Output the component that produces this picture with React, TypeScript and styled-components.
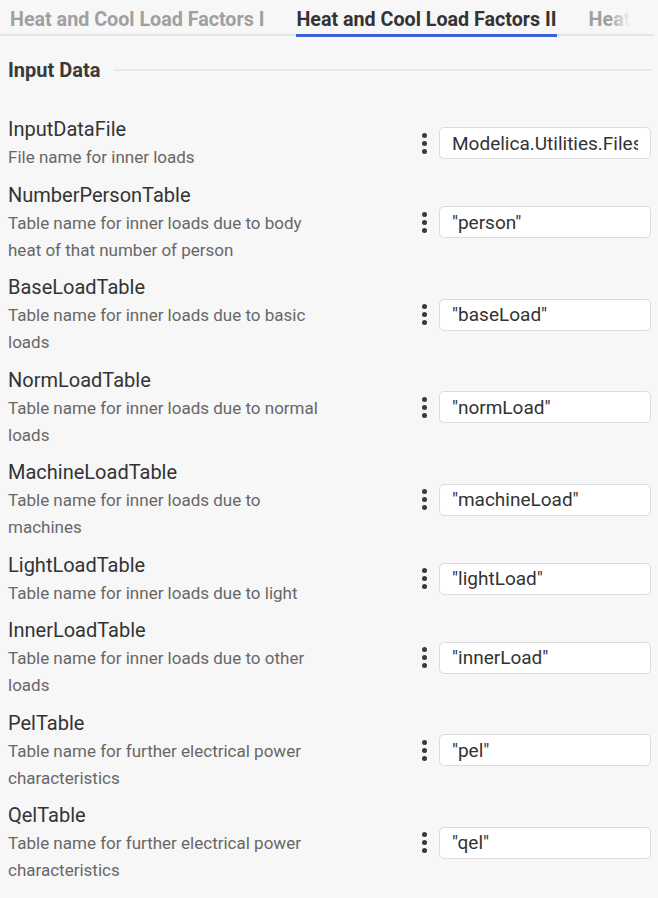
import styled, { createGlobalStyle } from 'styled-components';

const GlobalStyle = createGlobalStyle`
  html, body {
    margin: 0;
    padding: 0;
    background: #f7f7f7;
  }
  body {
    font-family: "Roboto", "Liberation Sans", sans-serif;
    color: #333;
  }
`;

type Param = {
    name: string;
    description: string;
    value: string;
};

const PARAMS: Param[] = [
    { name: 'InputDataFile', description: 'File name for inner loads', value: 'Modelica.Utilities.Files.loadResource()' },
    { name: 'NumberPersonTable', description: 'Table name for inner loads due to body heat of that number of person', value: '"person"' },
    { name: 'BaseLoadTable', description: 'Table name for inner loads due to basic loads', value: '"baseLoad"' },
    { name: 'NormLoadTable', description: 'Table name for inner loads due to normal loads', value: '"normLoad"' },
    { name: 'MachineLoadTable', description: 'Table name for inner loads due to machines', value: '"machineLoad"' },
    { name: 'LightLoadTable', description: 'Table name for inner loads due to light', value: '"lightLoad"' },
    { name: 'InnerLoadTable', description: 'Table name for inner loads due to other loads', value: '"innerLoad"' },
    { name: 'PelTable', description: 'Table name for further electrical power characteristics', value: '"pel"' },
    { name: 'QelTable', description: 'Table name for further electrical power characteristics', value: '"qel"' },
];

const TABS = ['Heat and Cool Load Factors I', 'Heat and Cool Load Factors II', 'Heat'];

const App = () => {
    const active = 1;

    return (
        <Page>
            <GlobalStyle />
            <TabBar>
                <TabStrip>
                    {TABS.map((tab, i) => (
                        <Tab key={tab} $active={i === active}>{tab}</Tab>
                    ))}
                    <TabFade />
                </TabStrip>
            </TabBar>
            <Section>
                <SectionHeader>
                    <SectionTitle>Input Data</SectionTitle>
                    <SectionRule />
                </SectionHeader>
                <ParamList>
                    {PARAMS.map((p) => (
                        <ParamRow key={p.name}>
                            <ParamInfo>
                                <ParamName>{p.name}</ParamName>
                                <ParamDesc>{p.description}</ParamDesc>
                            </ParamInfo>
                            <ParamControl>
                                <MenuDots aria-label="more">
                                    <span /><span /><span />
                                </MenuDots>
                                <ValueInput defaultValue={p.value} />
                            </ParamControl>
                        </ParamRow>
                    ))}
                </ParamList>
            </Section>
        </Page>
    );
}

export default App;

const Page = styled.div`
    width: 658px;
    min-height: 898px;
    background: #f7f7f7;
    overflow: hidden;
`;

const TabBar = styled.div`
    height: 34px;
    border-bottom: 2px solid #e6e6e6;
    margin-right: 4px;
`;

const TabStrip = styled.div`
    position: relative;
    display: flex;
    gap: 32px;
    width: 640px;
    height: 37px;
    padding-left: 10px;
    box-sizing: border-box;
    overflow: hidden;
    white-space: nowrap;
`;

const Tab = styled.div<{ $active: boolean }>`
    flex: none;
    padding-top: 10px;
    height: 24px;
    font-weight: 700;
    font-size: 19.7px;
    line-height: 20px;
    color: ${({ $active }) => ($active ? '#333' : '#a0a0a0')};
    border-bottom: 3px solid ${({ $active }) => ($active ? '#3c63d6' : 'transparent')};
`;

const TabFade = styled.div`
    position: absolute;
    right: 0;
    top: 0;
    height: 34px;
    width: 30px;
    background: linear-gradient(to right, rgba(247, 247, 247, 0), rgba(247, 247, 247, 0.9) 60%, #f7f7f7);
`;

const Section = styled.section`
    padding: 0 7px 0 8px;
`;

const SectionHeader = styled.div`
    display: flex;
    align-items: center;
    gap: 14px;
    height: 34px;
    margin-top: 17px;
`;

const SectionTitle = styled.div`
    font-weight: 700;
    font-size: 20px;
    color: #3a3a3a;
`;

const SectionRule = styled.div`
    flex: 1;
    height: 2px;
    background: #e8e8e8;
`;

const ParamList = styled.div`
    display: flex;
    flex-direction: column;
    gap: 9.5px;
    margin-top: 28px;
`;

const ParamRow = styled.div`
    display: flex;
    align-items: center;
    justify-content: space-between;
`;

const ParamInfo = styled.div`
    width: 315px;
`;

const ParamName = styled.div`
    font-size: 20px;
    line-height: 29px;
    color: #333;
`;

const ParamDesc = styled.div`
    font-size: 17px;
    line-height: 27px;
    color: #676767;
`;

const ParamControl = styled.div`
    display: flex;
    align-items: center;
    gap: 12px;
`;

const MenuDots = styled.div`
    display: flex;
    flex-direction: column;
    gap: 3px;
    width: 5px;

    span {
        width: 5px;
        height: 5px;
        border-radius: 50%;
        background: #3a3a3a;
    }
`;

const ValueInput = styled.input`
    width: 212px;
    height: 32px;
    box-sizing: border-box;
    padding: 0 12px;
    border: 1px solid #dcdcdc;
    border-radius: 5px;
    background: #fff;
    font-family: inherit;
    font-size: 19px;
    color: #333;
    outline: none;
`;
